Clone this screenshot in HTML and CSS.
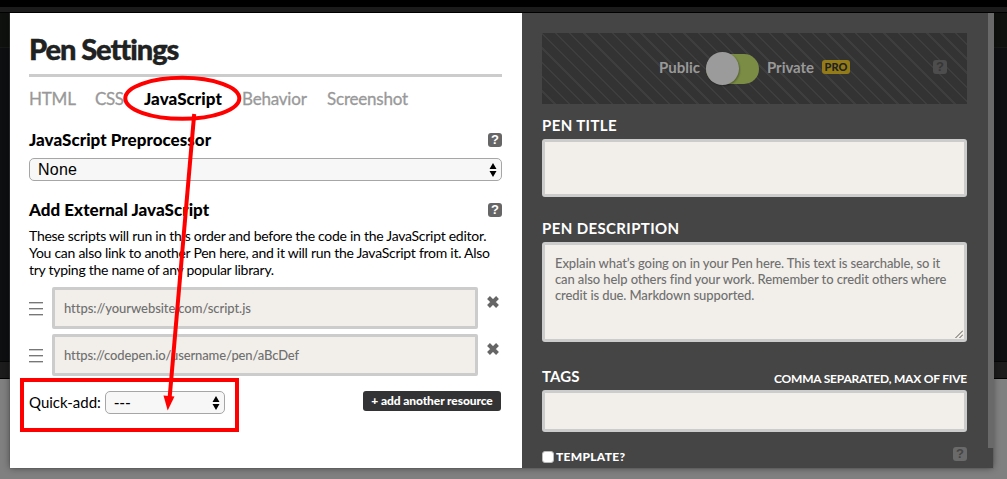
FILE: index.html
```html
<!DOCTYPE html>
<html lang="en">
<head>
<meta charset="utf-8">
<title>Pen Settings</title>
<link rel="stylesheet" href="styles.css">
</head>
<body>
<div class="editor">
  <div class="editor-top"></div>
  <div class="editor-code"></div>
  <div class="editor-bar"></div>
  <div class="editor-preview"></div>
</div>
<main class="modal">
  <section class="settings">
    <h1 class="title"><span class="t-title">Pen Settings</span></h1>
    <nav class="tabs">
      <span class="tab tab-html">HTML</span>
      <span class="tab tab-css">CSS</span>
      <span class="tab tab-js">JavaScript</span>
      <span class="tab tab-behavior">Behavior</span>
      <span class="tab">Screenshot</span>
    </nav>
    <div class="heading"><h2>JavaScript Preprocessor</h2><span class="help">?</span></div>
    <div class="select"><span>None</span><svg class="arrows" viewBox="0 0 8 14"><path d="M4 0L7.500 6H.5zM4 14L.5 8H7.500z"/></svg></div>
    <div class="heading heading-ext"><h2>Add External JavaScript</h2><span class="help">?</span></div>
    <p class="note"><span>These scripts will run in this order and before the code in the JavaScript editor.</span><br><span>You can also link to another Pen here, and it will run the JavaScript from it. Also</span><br><span>try typing the name of any popular library.</span></p>
    <div class="resource">
      <span class="grip"><i></i><i></i><i></i></span>
      <div class="url"><span>https://yourwebsite.com/script.js</span></div>
      <svg class="remove" viewBox="0 0 12 12"><path d="M1.500 1.500L10.500 10.500M10.500 1.500L1.500 10.500"/></svg>
    </div>
    <div class="resource">
      <span class="grip"><i></i><i></i><i></i></span>
      <div class="url"><span class="url-pen">https://codepen.io/username/pen/aBcDef</span></div>
      <svg class="remove" viewBox="0 0 12 12"><path d="M1.500 1.500L10.500 10.500M10.500 1.500L1.500 10.500"/></svg>
    </div>
    <div class="quick">
      <span class="quick-label">Quick-add:</span>
      <div class="select select-small"><span>---</span><svg class="arrows" viewBox="0 0 8 14"><path d="M4 0L7.500 6H.5zM4 14L.5 8H7.500z"/></svg></div>
      <span class="add">+ add another resource</span>
    </div>
  </section>
  <section class="details">
    <div class="privacy">
      <span class="public">Public</span>
      <span class="toggle"><i></i></span>
      <span class="private">Private</span>
      <span class="pro">PRO</span>
      <span class="help help-dim">?</span>
    </div>
    <div class="label label-title"><span>PEN TITLE</span></div>
    <div class="field field-title"></div>
    <div class="label label-desc"><span>PEN DESCRIPTION</span></div>
    <div class="field field-desc"><span>Explain what’s going on in your Pen here. This text is searchable, so it</span><br><span>can also help others find your work. Remember to credit others where</span><br><span>credit is due. Markdown supported.</span>
      <svg class="resize" viewBox="0 0 8 8"><path d="M0.500 8L8 .5M4.500 8L8 4.500"/></svg>
    </div>
    <div class="label label-tags"><span class="tags">TAGS</span><small>COMMA SEPARATED, MAX OF FIVE</small></div>
    <div class="field field-tags"></div>
    <div class="template"><i class="check"></i><span class="template-text">TEMPLATE?</span><span class="help help-mid">?</span></div>
  </section>
  <div class="scroll"></div>
</main>
<svg class="marks" viewBox="0 0 1007 479">
  <ellipse cx="182.300" cy="98.300" rx="57" ry="20.500"/>
  <rect x="22" y="380" width="215" height="50"/>
  <path d="M194.200 114L169.700 397"/>
  <path class="head" d="M163.500 395.500L174.500 396.500L167.700 410.500z"/>
</svg>
</body>
</html>
```
FILE: styles.css
```css
* { box-sizing: border-box; }
body { margin: 0; width: 1007px; height: 479px; overflow: hidden; position: relative; font-family: Lato, sans-serif; color: #000; background: #808080; }
h1, h2, p { margin: 0; }
span { white-space: nowrap; }
.editor { position: absolute; inset: 0; display: flex; flex-direction: column; }
.editor-top { height: 13px; background: linear-gradient(#000 7px, #1b1b1b 7px 12px, #000 12px); }
.editor-code { height: 348px; background: linear-gradient(#0f110f 34px, #171917 34px 35px, #0d0f11 35px); }
.editor-bar { height: 18px; background: #1c1c1c; border-top: 1px solid #060606; border-bottom: 1px solid #000; }
.editor-preview { flex: 1; background: #808080; }

.modal { position: absolute; left: 10px; top: 13px; width: 983px; height: 455px; display: flex; box-shadow: 0 0 7px rgba(0,0,0,.45), 0 0 0 1px rgba(110,110,110,.35); clip-path: inset(0 -10px -12px -10px); }
.settings { width: 512px; padding: 20px 20px 0 19px; background: #fff; }
.details { flex: 1; padding: 20px 26px 0 20px; background: #454545; color: #fff; overflow: hidden; }
.scroll { position: absolute; right: -1px; top: 0; width: 6px; height: 435px; background: #696969; }

.title { height: 44px; border-bottom: 3px solid #ccc; font-size: 29px; line-height: 32px; font-weight: 900; color: #202121; }
.t-title { letter-spacing: -1.05px; -webkit-text-stroke: .4px #202121; }
.tabs { display: flex; height: 43px; padding-top: 11px; font-size: 17px; line-height: 22px; letter-spacing: -.2px; color: #999; -webkit-text-stroke: .3px #999; }
.tab-html { width: 66px; }
.tab-css { width: 49px; letter-spacing: -.4px; }
.tab-js { width: 98px; font-weight: 900; letter-spacing: .05px; color: #000; -webkit-text-stroke: 0; }
.tab-behavior { width: 85px; }
.heading { display: flex; justify-content: space-between; height: 38px; padding-top: 11px; }
h2 { font-size: 17px; line-height: 18px; font-weight: 900; letter-spacing: .03px; white-space: nowrap; }
.heading-ext { height: 47px; padding-top: 20px; }
.help { width: 14px; height: 14px; margin-top: 2px; border-radius: 3px; background: #666; color: #fff; font: bold 13px/14px "Liberation Sans", sans-serif; text-align: center; flex: none; }
.select { display: flex; align-items: center; justify-content: space-between; height: 23px; padding: 0 4px 0 8px; border: 1px solid #a6a6a6; border-radius: 5px; background: #f7f7f7; font: 16px/20px "Liberation Sans", sans-serif; letter-spacing: .25px; }
.arrows { width: 8px; height: 14px; }
.note { height: 60px; margin-top: -1px; font-size: 14px; line-height: 17px; letter-spacing: -.27px; }
.resource { display: flex; height: 47px; }
.grip { width: 14px; margin: 15px 9px 0 0; display: flex; flex-direction: column; gap: 4px; }
.grip i { height: 2px; background: #777; border-bottom: 1px solid #ccc; }
.url { width: 426px; height: 42px; padding: 10px 9px; border: 3px solid #ccc; border-radius: 2px; background: #f2efea; font-size: 13px; line-height: 16px; font-weight: 500; letter-spacing: -.06px; color: #707070; }
.url-pen { letter-spacing: -.13px; }
.remove { width: 12px; height: 12px; margin: 9px 0 0 8.500px; stroke: #666; stroke-width: 4; fill: none; overflow: visible; flex: none; }
.quick { display: flex; height: 40px; padding-top: 10px; }
.quick-label { width: 76px; font-size: 15px; line-height: 22px; }
.select-small { width: 120px; }
.add { width: 138px; height: 20px; margin-left: auto; margin-right: 1px; border-radius: 3px; background: #333335; color: #fff; font-size: 12px; line-height: 19px; font-weight: 900; letter-spacing: -.1px; text-align: center; }

.privacy { display: flex; width: 425px; height: 71px; padding: 0 20px 0 117px; align-items: center; font-size: 15px; line-height: 18px; font-weight: bold; color: #999; background: repeating-linear-gradient(45deg, #333 0 8.400px, #3e3e3e 8.400px 10.100px); }
.public { width: 47px; margin-top: -4px; }
.toggle { width: 53px; height: 30px; border-radius: 15px; background: #7b8d45; }
.toggle i { display: block; width: 33px; height: 33px; margin: -2px 0 0 0; border-radius: 50%; background: #9b9b9b; box-shadow: 1px 1px 2px rgba(0,0,0,.3); }
.private { width: 55px; margin: -4px 0 0 8px; letter-spacing: -.05px; }
.pro { width: 28px; height: 14px; margin-top: -3px; border-radius: 3px; background: #937c18; color: #222; font-size: 11px; line-height: 14px; font-weight: 900; text-align: center; }
.help-dim { margin: -3px 0 0 auto; background: #4d4d4d; color: #363636; }
.label { display: flex; justify-content: space-between; font-size: 15px; line-height: 18px; font-weight: bold; letter-spacing: .38px; }
.label-title { height: 35px; padding-top: 12px; }
.label-desc { height: 45px; padding-top: 22px; }
.label-tags { height: 48px; padding-top: 25px; }
.tags { letter-spacing: .1px; }
.label small { width: 193px; font-size: 12px; line-height: 23px; letter-spacing: -.21px; white-space: nowrap; }
.label-tags { width: 425px; }
.field { position: relative; width: 425px; border: 3px solid #ccc; border-radius: 3px; background: #f2efea; }
.field-title { height: 58px; }
.field-desc { height: 100px; padding: 10px 10px; font-size: 13px; line-height: 16px; letter-spacing: -.1px; color: #707070; font-weight: 500; }
.field-tags { height: 42px; }
.resize { position: absolute; right: 1px; bottom: 1px; width: 8px; height: 8px; stroke: #555; fill: none; stroke-width: 1; }
.template { display: flex; width: 425px; padding-top: 15px; font-size: 12px; line-height: 19px; font-weight: 900; letter-spacing: .3px; }
.check { width: 12px; height: 12px; margin: 4px 2px 0 0; border-radius: 3px; background: #fff; border: 1px solid #bbb; }
.help-mid { margin: 0 0 0 auto; background: #6a6a6a; color: #454545; }

.marks { position: absolute; left: 0; top: 0; width: 1007px; height: 479px; fill: none; stroke: #f00; stroke-width: 4; }
.marks .head { fill: #f00; stroke: none; }
```
